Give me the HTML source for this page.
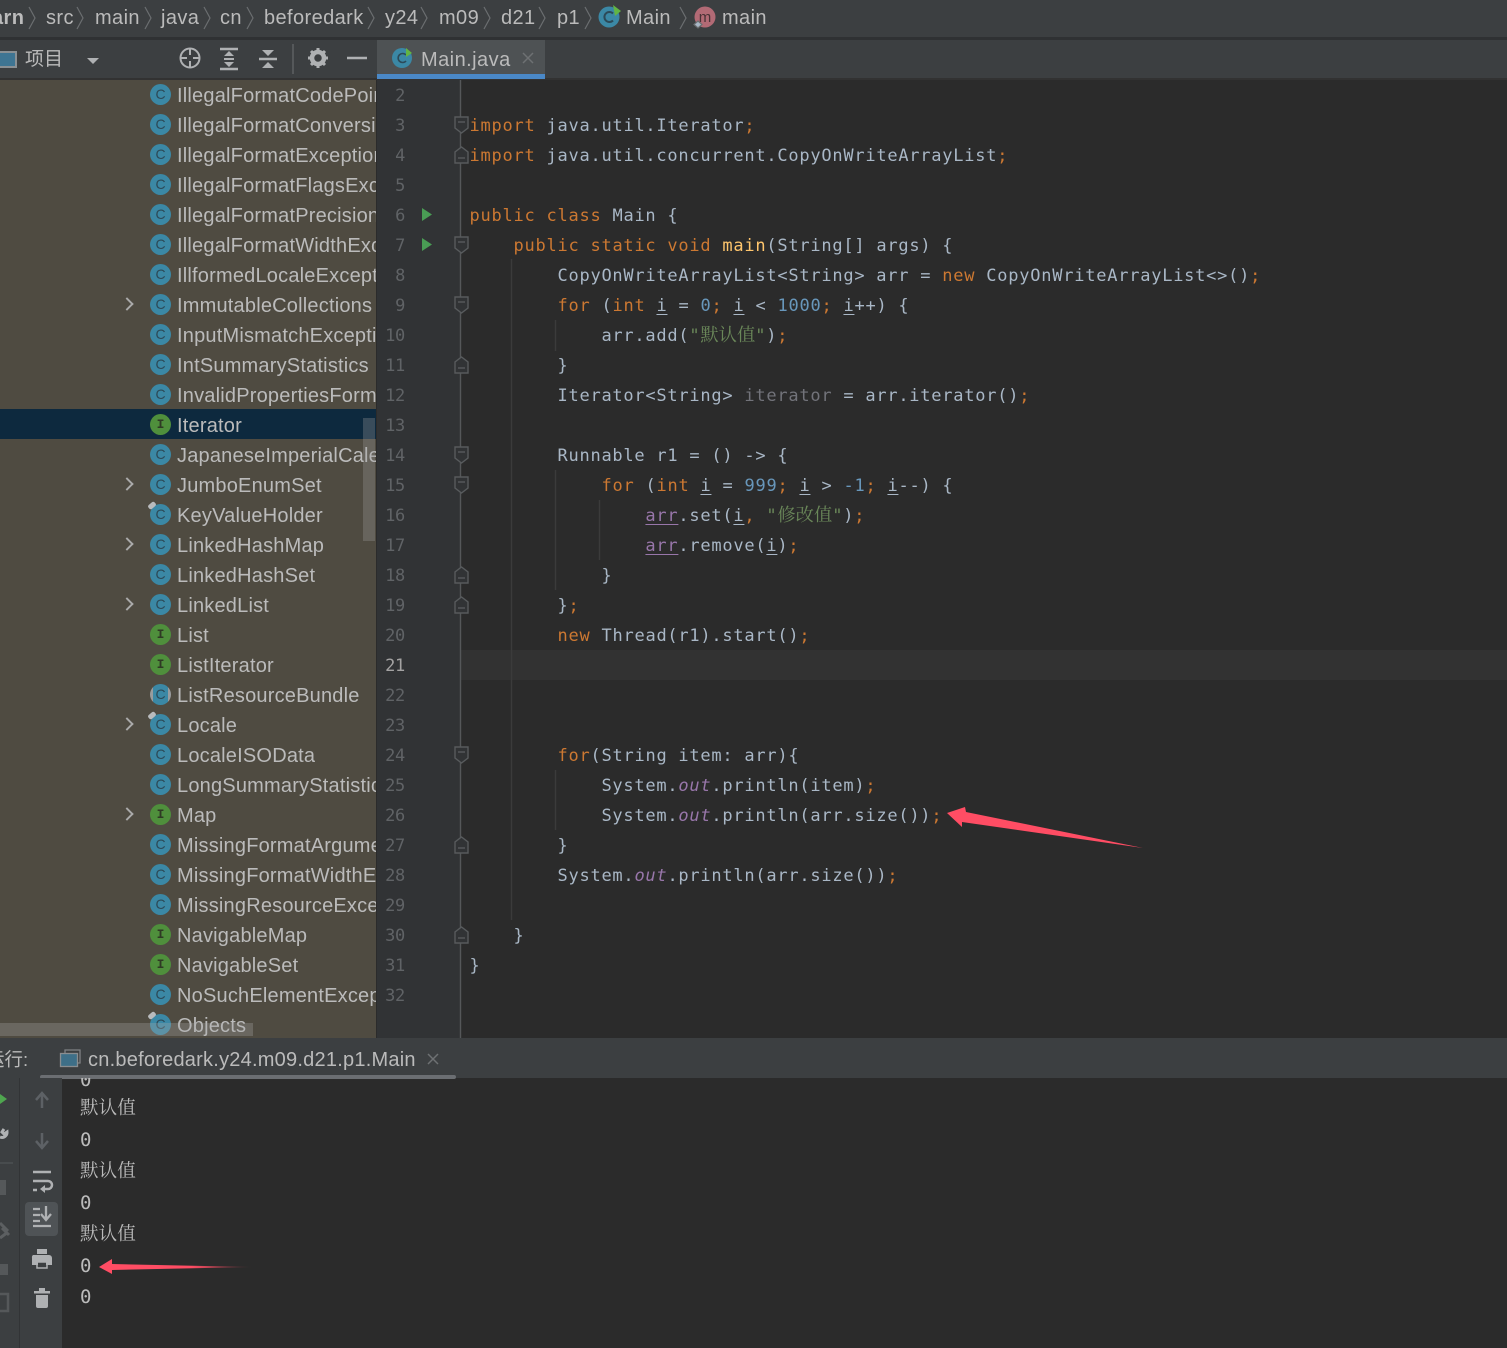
<!DOCTYPE html>
<html><head><meta charset="utf-8"><style>
html,body{margin:0;padding:0;background:#2b2b2b}
#p{position:relative;width:1507px;height:1348px;overflow:hidden;background:#2b2b2b;font-family:"Liberation Sans","Noto Sans CJK SC",sans-serif;color:#bbbbbb}
.a{position:absolute}
.bc{position:absolute;top:0;height:36px;line-height:36px;font-size:20px;letter-spacing:.4px;color:#bbbbbb;white-space:pre}
#side{position:absolute;left:0;top:80px;width:376px;height:958px;background:#4f4b41;overflow:hidden}
.r{position:relative;height:30px;line-height:33px;font-size:20px;letter-spacing:.2px;color:#bbbbbb;white-space:pre;padding-left:177px;box-sizing:border-box}
.r.s{background:#0d293e;top:-1px;line-height:35px}
.r.s .ic{top:5px}
.ic{position:absolute;left:150px;top:4px;width:21px;height:21px;border-radius:50%;background:#3b88a5;color:#2c4a58;font:14px/21px "Liberation Sans",sans-serif;letter-spacing:0;text-align:center}
.ic.i{background:#4f8f3c;color:#2f3a24;font:bold 13px/21px "Liberation Mono",monospace}
.r.x::before{content:"";position:absolute;left:122px;top:9px;width:8px;height:8px;border-top:2px solid #aaa;border-right:2px solid #aaa;transform:rotate(45deg) scale(.95)}
.pin::after{content:"";position:absolute;left:-2px;top:-1px;width:8px;height:5px;background:#b9bbbd;border-radius:2px;transform:rotate(-40deg)}
#nums{position:absolute;left:377px;top:80px;width:84px;height:958px;background:#313335}
#nums div{height:30px;font:17px/33px "DejaVu Sans Mono",monospace;letter-spacing:-.3px;color:#606366;text-align:right;width:28px}
#code{position:absolute;left:469.500px;top:81px;font-family:"DejaVu Sans Mono",monospace;font-size:17px;letter-spacing:.76px;color:#a9b7c6}
#code div{height:30px;line-height:30px;white-space:pre}
.k{color:#cc7832}.n{color:#6897bb}.t{color:#6a8759}.m{color:#ffc66d}.o{color:#9876aa;font-style:italic}
.v{color:#9876aa;text-decoration:underline;text-underline-offset:3px}
.u{text-decoration:underline;text-underline-offset:3px}
.g{color:#72737a}
.z{font-family:"Noto Serif CJK SC",serif;font-size:18.3px;letter-spacing:0;line-height:0}
.c{position:absolute;left:80px;white-space:pre;height:30px;line-height:30px}
.d{font:19px/32px "DejaVu Sans Mono",monospace}
.h{font:18.6px/30px "Noto Serif CJK SC",serif}
</style></head><body><div id="p">

<!-- top breadcrumb -->
<div class="a" style="left:0;top:0;width:1507px;height:37px;background:#3c3f41"></div>
<div class="a" style="left:0;top:37px;width:1507px;height:3px;background:#2f3133"></div>
<div class="bc" style="left:-8px;font-weight:bold">arn</div>
<div class="bc" style="left:46px">src</div>
<div class="bc" style="left:95px">main</div>
<div class="bc" style="left:161px">java</div>
<div class="bc" style="left:220px">cn</div>
<div class="bc" style="left:264px">beforedark</div>
<div class="bc" style="left:385px">y24</div>
<div class="bc" style="left:439px">m09</div>
<div class="bc" style="left:501px">d21</div>
<div class="bc" style="left:557px">p1</div>
<div class="bc" style="left:626px">Main</div>
<div class="bc" style="left:722px">main</div>
<svg class="a" style="left:0;top:0" width="800" height="37" fill="none" stroke="#6b6e70" stroke-width="1.2">
<path d="M29 7l6 11-6 11M77 7l6 11-6 11M145 7l6 11-6 11M204 7l6 11-6 11M247 7l6 11-6 11M368 7l6 11-6 11M421 7l6 11-6 11M484 7l6 11-6 11M539 7l6 11-6 11M585 7l6 11-6 11M680 7l6 11-6 11"/>
<circle cx="609" cy="17" r="10.500" fill="#3b88a5" stroke="none"/>
<path d="M613 13.500a5 5 0 1 0 0 7" stroke="#2c4a58" stroke-width="2"/>
<path d="M613 5l8 6-6 5z" fill="#62b543" stroke="none"/>
<circle cx="705" cy="17" r="10.500" fill="#b26a75" stroke="none"/>
<text x="705" y="22" text-anchor="middle" font-family="Liberation Sans" font-size="15" fill="#4a3236" stroke="none">m</text>
<path d="M698 21l4 3.500-4 3.500-4-3.500z" fill="#a9b7c6" stroke="#6b6e70"/>
</svg>

<!-- toolbar -->
<div class="a" style="left:0;top:40px;width:1507px;height:38px;background:#3c3f41"></div>
<div class="a" style="left:0;top:78px;width:1507px;height:2px;background:#323232"></div>
<svg class="a" style="left:0;top:40px" width="377" height="38" fill="none" stroke="#afb1b3" stroke-width="2">
<rect x="-4" y="12" width="20" height="15" fill="#3e7593" stroke="#8a9094"/>
<path d="M87 18h12l-6 6z" fill="#afb1b3" stroke="none"/>
<circle cx="190" cy="18" r="9.500"/>
<path d="M190 8v7M190 21v7M180 18h7M193 18h7"/>
<path d="M220 9h18M220 29h18" stroke-width="2.500"/>
<path d="M229 11l-5 5h10zM229 27l-5-5h10z" fill="#afb1b3" stroke="none"/>
<path d="M224 19h10"/>
<path d="M268 16l-6-6h12zM268 22l-6 6h12z" fill="#afb1b3" stroke="none"/>
<path d="M259 19h18" stroke-width="2.500"/>
<path d="M293 4v30" stroke="#55585a"/>
<circle cx="318" cy="18" r="6" stroke-width="4.500"/>
<path d="M318 8v4M318 24v4M308 18h4M324 18h4M311 11l3 3M325 11l-3 3M311 25l3-3M325 25l-3-3" stroke-width="3"/>
<path d="M347 18h20" stroke-width="2.500"/>
</svg>
<div class="a" style="left:25px;top:41px;line-height:38px;font-size:19px;color:#bbbbbb">项目</div>

<!-- tab -->
<div class="a" style="left:377px;top:40px;width:168px;height:34px;background:#4e5254"></div>
<div class="a" style="left:377px;top:74px;width:168px;height:5px;background:#4a88c7"></div>
<div class="a" style="left:421px;top:41px;line-height:38px;font-size:20px;letter-spacing:.45px;color:#bbbbbb">Main.java</div>
<svg class="a" style="left:377px;top:40px" width="168" height="34" fill="none">
<circle cx="25" cy="18" r="10" fill="#3b88a5"/>
<path d="M29 15a4.500 4.500 0 1 0 0 6" stroke="#2c4a58" stroke-width="1.600"/>
<path d="M29 8l6 5-6 4z" fill="#62b543"/>
<path d="M146 13l10 10M156 13l-10 10" stroke="#6e7173" stroke-width="1.500"/>
</svg>

<!-- sidebar -->
<div id="side">
<div class="r"><span class="ic">C</span>IllegalFormatCodePoint</div>
<div class="r"><span class="ic">C</span>IllegalFormatConversion</div>
<div class="r"><span class="ic">C</span>IllegalFormatException</div>
<div class="r"><span class="ic">C</span>IllegalFormatFlagsException</div>
<div class="r"><span class="ic">C</span>IllegalFormatPrecision</div>
<div class="r"><span class="ic">C</span>IllegalFormatWidthException</div>
<div class="r"><span class="ic">C</span>IllformedLocaleException</div>
<div class="r x"><span class="ic">C</span>ImmutableCollections</div>
<div class="r"><span class="ic">C</span>InputMismatchException</div>
<div class="r"><span class="ic">C</span>IntSummaryStatistics</div>
<div class="r"><span class="ic">C</span>InvalidPropertiesFormat</div>
<div class="r s"><span class="ic i">I</span>Iterator</div>
<div class="r"><span class="ic">C</span>JapaneseImperialCalendar</div>
<div class="r x"><span class="ic">C</span>JumboEnumSet</div>
<div class="r"><span class="ic pin">C</span>KeyValueHolder</div>
<div class="r x"><span class="ic">C</span>LinkedHashMap</div>
<div class="r"><span class="ic">C</span>LinkedHashSet</div>
<div class="r x"><span class="ic">C</span>LinkedList</div>
<div class="r"><span class="ic i">I</span>List</div>
<div class="r"><span class="ic i">I</span>ListIterator</div>
<div class="r"><span class="ic" style="background:linear-gradient(90deg,#9a9c9e 0 3px,#3b88a5 3px 18px,#9a9c9e 18px)">C</span>ListResourceBundle</div>
<div class="r x"><span class="ic pin">C</span>Locale</div>
<div class="r"><span class="ic">C</span>LocaleISOData</div>
<div class="r"><span class="ic">C</span>LongSummaryStatistics</div>
<div class="r x"><span class="ic i">I</span>Map</div>
<div class="r"><span class="ic">C</span>MissingFormatArgument</div>
<div class="r"><span class="ic">C</span>MissingFormatWidthException</div>
<div class="r"><span class="ic">C</span>MissingResourceException</div>
<div class="r"><span class="ic i">I</span>NavigableMap</div>
<div class="r"><span class="ic i">I</span>NavigableSet</div>
<div class="r"><span class="ic">C</span>NoSuchElementException</div>
<div class="r"><span class="ic pin">C</span>Objects</div>
</div>
<div class="a" style="left:363px;top:418px;width:12px;height:123px;background:rgba(160,160,160,.3)"></div>
<div class="a" style="left:0;top:1023px;width:253px;height:13px;background:rgba(170,170,170,.3)"></div>

<!-- gutter -->
<div id="nums">
<div>2</div><div>3</div><div>4</div><div>5</div><div>6</div><div>7</div><div>8</div><div>9</div><div>10</div><div>11</div><div>12</div><div>13</div><div>14</div><div>15</div><div>16</div><div>17</div><div>18</div><div>19</div><div>20</div><div style="color:#a4a3a3">21</div><div>22</div><div>23</div><div>24</div><div>25</div><div>26</div><div>27</div><div>28</div><div>29</div><div>30</div><div>31</div><div>32</div>
</div>
<div class="a" style="left:461px;top:650px;width:1046px;height:30px;background:#323232"></div>

<svg class="a" style="left:0;top:0" width="700" height="1040" fill="none">
<defs>
<g id="fd"><path d="M455 -8h13v11l-6.500 5-6.500-5z" fill="#313335" stroke="#585b5d" stroke-width="1.400"/><path d="M458 -3h7" stroke="#585b5d" stroke-width="1.400"/></g>
<g id="fu"><path d="M455 8h13v-11l-6.500-5-6.500 5z" fill="#313335" stroke="#585b5d" stroke-width="1.400"/><path d="M458 3h7" stroke="#585b5d" stroke-width="1.400"/></g>
</defs>
<path d="M460.500 80V1038" stroke="#555759" stroke-width="1.400"/>
<path d="M511.500 259V920M555.500 320V351M555.500 470V590M599.500 500V560M555.500 770V830" stroke="#3b3b3b" stroke-width="1.400"/>
<use href="#fd" y="125"/><use href="#fu" y="155"/><use href="#fd" y="245"/><use href="#fd" y="305"/><use href="#fu" y="365"/><use href="#fd" y="455"/><use href="#fd" y="485"/><use href="#fu" y="575"/><use href="#fu" y="605"/><use href="#fd" y="755"/><use href="#fu" y="845"/><use href="#fu" y="935"/>
<path d="M422 208l10 6.500-10 6.500zM422 238l10 6.500-10 6.500z" fill="#499c54"/>
</svg>

<!-- code -->
<div id="code"><div> </div><div><span class="k">import</span> java.util.Iterator<span class="k">;</span></div><div><span class="k">import</span> java.util.concurrent.CopyOnWriteArrayList<span class="k">;</span></div><div> </div><div><span class="k">public class</span> Main {</div><div>    <span class="k">public static void</span> <span class="m">main</span>(String[] args) {</div><div>        CopyOnWriteArrayList&lt;String&gt; arr = <span class="k">new</span> CopyOnWriteArrayList&lt;&gt;()<span class="k">;</span></div><div>        <span class="k">for</span> (<span class="k">int</span> <span class="u">i</span> = <span class="n">0</span><span class="k">;</span> <span class="u">i</span> &lt; <span class="n">1000</span><span class="k">;</span> <span class="u">i</span>++) {</div><div>            arr.add(<span class="t">"<span class="z">默认值</span>"</span>)<span class="k">;</span></div><div>        }</div><div>        Iterator&lt;String&gt; <span class="g">iterator</span> = arr.iterator()<span class="k">;</span></div><div> </div><div>        Runnable r1 = () -&gt; {</div><div>            <span class="k">for</span> (<span class="k">int</span> <span class="u">i</span> = <span class="n">999</span><span class="k">;</span> <span class="u">i</span> &gt; <span class="n">-1</span><span class="k">;</span> <span class="u">i</span>--) {</div><div>                <span class="v">arr</span>.set(<span class="u">i</span><span class="k">,</span> <span class="t">"<span class="z">修改值</span>"</span>)<span class="k">;</span></div><div>                <span class="v">arr</span>.remove(<span class="u">i</span>)<span class="k">;</span></div><div>            }</div><div>        }<span class="k">;</span></div><div>        <span class="k">new</span> Thread(r1).start()<span class="k">;</span></div><div> </div><div> </div><div> </div><div>        <span class="k">for</span>(String item: arr){</div><div>            System.<span class="o">out</span>.println(item)<span class="k">;</span></div><div>            System.<span class="o">out</span>.println(arr.size())<span class="k">;</span></div><div>        }</div><div>        System.<span class="o">out</span>.println(arr.size())<span class="k">;</span></div><div> </div><div>    }</div><div>}</div></div>

<!-- run bar -->
<div class="a" style="left:0;top:1038px;width:1507px;height:40px;background:#3c3f41"></div>
<div class="a" style="left:-14px;top:1039px;line-height:42px;font-size:18.500px;color:#bbbbbb">运行:</div>
<div class="a" style="left:88px;top:1039px;line-height:42px;font-size:20px;letter-spacing:.23px;color:#bbbbbb;white-space:pre">cn.beforedark.y24.m09.d21.p1.Main</div>
<svg class="a" style="left:0;top:1038px" width="470" height="40" fill="none">
<path d="M65 15v-3h15v13h-3" stroke="#7f8285" stroke-width="1.300"/>
<rect x="60.500" y="15.500" width="17" height="13" fill="#3e6f88" stroke="#8a8d90" stroke-width="1.300"/>
<path d="M428 16l10 10M438 16l-10 10" stroke="#6e7173" stroke-width="1.500"/>
</svg>
<div class="a" style="left:40px;top:1075px;width:416px;height:4px;background:#6b6e72;border-radius:2px"></div>

<!-- console left -->
<div class="a" style="left:0;top:1078px;width:62px;height:270px;background:#3c3f41"></div>
<div class="a" style="left:19px;top:1078px;width:1px;height:270px;background:#323436"></div>
<div class="a" style="left:25px;top:1202px;width:33px;height:34px;background:#4f5356;border-radius:4px"></div>
<svg class="a" style="left:0;top:1078px" width="62" height="270" fill="none">
<path d="M0 16l7 5-7 5z" fill="#4fa64f"/>
<path d="M0 59a5 5 0 0 0 7-5l-3 2-2-2 2-3" stroke="#b0b2b4" stroke-width="3"/>
<path d="M0 85h13" stroke="#55585a" stroke-width="1"/>
<rect x="-3" y="102" width="9" height="15" fill="#55585a"/>
<path d="M0 145l8 8M0 160l8-6M2 150l7 7" stroke="#5c5f61" stroke-width="3"/>
<rect x="-4" y="186" width="12" height="11" fill="#55585a"/>
<rect x="-4" y="216" width="12" height="17" stroke="#55585a" stroke-width="2.500"/>
<path d="M42 16v14M36 22l6-7 6 7" stroke="#5d6165" stroke-width="2.500"/>
<path d="M42 55v14M36 63l6 7 6-7" stroke="#5d6165" stroke-width="2.500"/>
<path d="M33 94h18M33 103h15a4 4 0 0 1 0 8h-5M33 112h4" stroke="#afb1b3" stroke-width="2.500"/>
<path d="M45 107v8l-5-4z" fill="#afb1b3"/>
<path d="M33 131h7M33 137h7M33 143h7M33 148h18" stroke="#afb1b3" stroke-width="2.300"/>
<path d="M46 128v12M41 136l5 6 5-6" stroke="#afb1b3" stroke-width="2.300"/>
<path d="M37 171h10v5H37z" fill="#afb1b3"/>
<path d="M33 177h16a3 3 0 0 1 3 3v7h-6v-3H38v3h-6v-7a3 3 0 0 1 1-3z" fill="#afb1b3"/>
<rect x="37" y="184" width="10" height="6" stroke="#afb1b3" stroke-width="1.500"/>
<path d="M34 213h16v2.500H34zM39 210h6v3h-6zM36 217h12v11a2 2 0 0 1-2 2h-8a2 2 0 0 1-2-2z" fill="#afb1b3"/>
</svg>

<!-- console -->
<div class="c d" style="top:1064px;clip-path:inset(14px 0 0 0);color:#bbb">0</div>
<div class="c h" style="top:1092px">默认值</div>
<div class="c d" style="top:1124px">0</div>
<div class="c h" style="top:1155px">默认值</div>
<div class="c d" style="top:1187px">0</div>
<div class="c h" style="top:1218px">默认值</div>
<div class="c d" style="top:1250px">0</div>
<div class="c d" style="top:1281px">0</div>

<!-- arrows -->
<svg class="a" style="left:0;top:0" width="1507" height="1348" fill="none">
<defs><linearGradient id="fa" x1="0" x2="1" y1="0" y2="0"><stop offset="0" stop-color="#ff4d64"/><stop offset=".6" stop-color="#ff4d64"/><stop offset="1" stop-color="#ff4d64" stop-opacity="0"/></linearGradient></defs>
<path d="M947 813L965 807L966 812L1143 848L962 822L962 827Z" fill="#ff4d64"/>
<path d="M99 1267L112 1259L112 1264L253 1267L112 1270L112 1274Z" fill="url(#fa)"/>
</svg>
</div></body></html>
